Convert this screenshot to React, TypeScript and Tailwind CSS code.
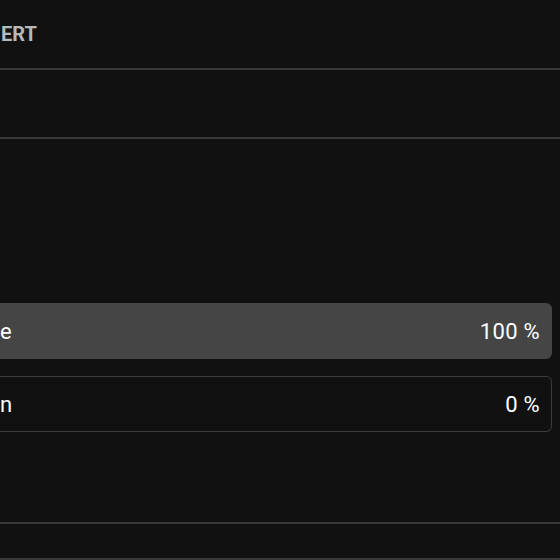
import React from "react";

export default function App() {
  return (
    <div
      className="w-[560px] h-[560px] overflow-hidden bg-[#111111] flex flex-col"
      style={{ fontFamily: "Roboto, 'Noto Sans', sans-serif" }}
    >
      <div className="h-[68px] flex items-center">
        <span className="text-[20px] font-bold text-[#b9b9b9] ml-[1px]">ERT</span>
      </div>
      <div className="h-[2px] bg-[#3a3a3a]" />
      <div className="h-[67px]" />
      <div className="h-[2px] bg-[#3a3a3a]" />
      <div className="flex-1 flex flex-col pr-[8px] pt-[164px]">
        <div className="h-[56px] bg-[#454545] rounded-r-[6px] flex items-center justify-between pr-[12px]">
          <span className="text-[22px] text-white ml-[0px]">e</span>
          <span className="text-[22px] text-white tracking-[0.3px]">100 %</span>
        </div>
        <div className="h-[56px] mt-[17px] border border-l-0 border-[#3c3c3c] rounded-r-[6px] flex items-center justify-between pr-[11px]">
          <span className="text-[22px] text-white ml-[0px]">n</span>
          <span className="text-[22px] text-white tracking-[0.3px]">0 %</span>
        </div>
      </div>
      <div className="h-[2px] bg-[#3a3a3a]" />
      <div className="h-[34px]" />
      <div className="h-[2px] bg-[#3a3a3a]" />
    </div>
  );
}
